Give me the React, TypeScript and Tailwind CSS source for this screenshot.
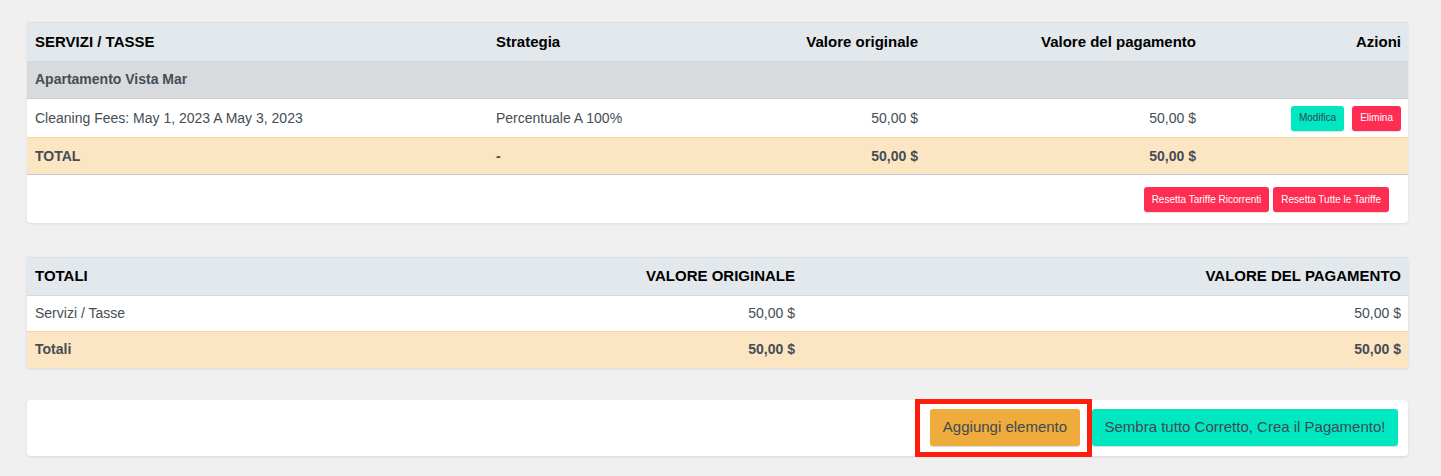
const font = { fontFamily: '"Liberation Sans", Arial, sans-serif' }

function SmallButton({ children, tone }: { children: React.ReactNode; tone: 'teal' | 'red' }) {
  const cls =
    tone === 'teal'
      ? 'bg-[#00e8c2] text-[#35444c]'
      : 'bg-[#ff2d52] text-white'
  return (
    <button className={`${cls} h-[25px] rounded-[3px] px-[8px] text-[10px] leading-none shadow-[0_1px_1px_rgba(0,0,0,0.12)]`}>
      {children}
    </button>
  )
}

export default function App() {
  return (
    <div className="min-h-[476px] bg-[#f0f0f0] pl-[27px] pr-[33px] pt-[22px]" style={font}>
      {/* Servizi / tasse */}
      <div className="overflow-hidden rounded-b-[4px] bg-white shadow-[0_1px_3px_rgba(0,0,0,0.08)]">
        <table className="w-full table-fixed border-collapse text-[14px] text-[#454d55]">
          <colgroup>
            <col className="w-[461px]" />
            <col className="w-[219px]" />
            <col className="w-[219px]" />
            <col className="w-[278px]" />
            <col />
          </colgroup>
          <thead>
            <tr className="h-[38px] border-t border-[#dbe2e6] bg-[#e2e8eb] text-[15px] font-bold text-black">
              <th className="px-[8px] text-left">SERVIZI / TASSE</th>
              <th className="px-[8px] text-left">Strategia</th>
              <th className="px-[8px] text-right">Valore originale</th>
              <th className="px-[8px] text-right">Valore del pagamento</th>
              <th className="px-[7px] text-right">Azioni</th>
            </tr>
          </thead>
          <tbody>
            <tr className="h-[38px] border-b border-[#c6ccd0] bg-[#d8dbde] font-bold">
              <td className="px-[8px]" colSpan={5}>Apartamento Vista Mar</td>
            </tr>
            <tr className="h-[39px] border-b border-[#f7d896]">
              <td className="px-[8px]">Cleaning Fees: May 1, 2023 A May 3, 2023</td>
              <td className="px-[8px]">Percentuale A 100%</td>
              <td className="px-[8px] text-right">50,00 $</td>
              <td className="px-[8px] text-right">50,00 $</td>
              <td className="px-[7px] text-right">
                <div className="flex justify-end gap-[8px]">
                  <SmallButton tone="teal">Modifica</SmallButton>
                  <SmallButton tone="red">Elimina</SmallButton>
                </div>
              </td>
            </tr>
            <tr className="h-[37px] border-b border-[#c6c9cc] bg-[#fbe5c3] font-bold">
              <td className="px-[8px]">TOTAL</td>
              <td className="px-[8px]">-</td>
              <td className="px-[8px] text-right">50,00 $</td>
              <td className="px-[8px] text-right">50,00 $</td>
              <td className="px-[7px]"></td>
            </tr>
          </tbody>
        </table>
        <div className="flex justify-end gap-[4px] pb-[11px] pr-[19px] pt-[12px]">
          <SmallButton tone="red">Resetta Tariffe Ricorrenti</SmallButton>
          <SmallButton tone="red">Resetta Tutte le Tariffe</SmallButton>
        </div>
      </div>

      {/* Totali */}
      <div className="mt-[34px] overflow-hidden bg-white shadow-[0_1px_3px_rgba(0,0,0,0.1)]">
        <table className="w-full table-fixed border-collapse text-[14px] text-[#454d55]">
          <colgroup>
            <col className="w-[388px]" />
            <col className="w-[388px]" />
            <col />
          </colgroup>
          <thead>
            <tr className="h-[38px] border-t border-[#dbe2e6] border-b border-b-[#d3d9dd] bg-[#e2e8eb] text-[15px] font-bold text-black">
              <th className="px-[8px] text-left">TOTALI</th>
              <th className="px-[8px] text-right">VALORE ORIGINALE</th>
              <th className="px-[7px] text-right">VALORE DEL PAGAMENTO</th>
            </tr>
          </thead>
          <tbody>
            <tr className="h-[36px] border-b border-[#f2d69c]">
              <td className="px-[8px]">Servizi / Tasse</td>
              <td className="px-[8px] text-right">50,00 $</td>
              <td className="px-[7px] text-right">50,00 $</td>
            </tr>
            <tr className="h-[36px] bg-[#fbe5c3] font-bold">
              <td className="px-[8px]">Totali</td>
              <td className="px-[8px] text-right">50,00 $</td>
              <td className="px-[7px] text-right">50,00 $</td>
            </tr>
          </tbody>
        </table>
      </div>

      {/* Azioni finali */}
      <div className="mt-[32px] flex h-[56px] items-center justify-end gap-[12px] rounded-[4px] bg-white pr-[10px] shadow-[0_1px_3px_rgba(0,0,0,0.1)]">
        <div className="relative">
          <button className="h-[37px] w-[150px] rounded-[3px] bg-[#f0ab3d] text-[15px] text-[#3e4a52] shadow-[0_1px_1px_rgba(0,0,0,0.15)]">
            Aggiungi elemento
          </button>
          {/* annotation box drawn over the button */}
          <span className="pointer-events-none absolute -bottom-[11px] -left-[15px] -right-[12px] -top-[10px] border-[5px] border-[#ff1e0e]" />
        </div>
        <button className="h-[37px] w-[306px] rounded-[3px] bg-[#00e8c2] text-[15px] text-[#3e4a52] shadow-[0_1px_1px_rgba(0,0,0,0.15)]">
          Sembra tutto Corretto, Crea il Pagamento!
        </button>
      </div>
    </div>
  )
}
